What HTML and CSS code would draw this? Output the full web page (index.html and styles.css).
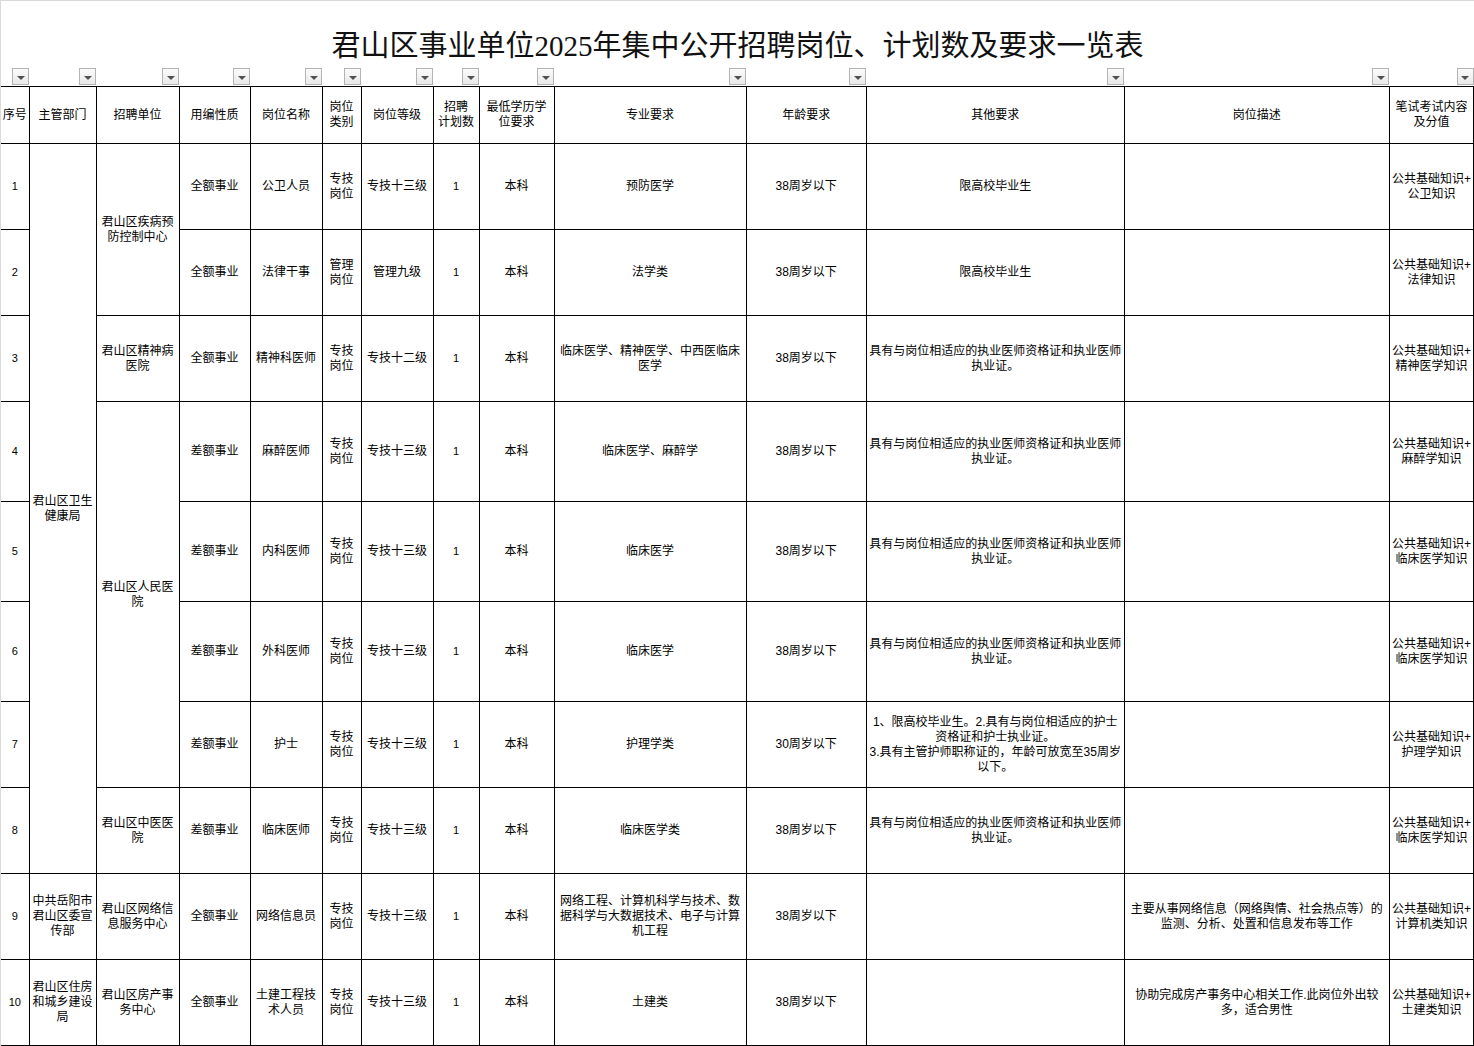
FILE: index.html
```html
<!DOCTYPE html>
<html lang="zh-CN">
<head>
<meta charset="utf-8">
<title>君山区事业单位2025年集中公开招聘岗位、计划数及要求一览表</title>
<link rel="stylesheet" href="styles.css">
</head>
<body>
<div class="sheet">
  <div class="title">君山区事业单位2025年集中公开招聘岗位、计划数及要求一览表</div>
  <table class="grid">
    <colgroup>
      <col class="c1"><col class="c2"><col class="c3"><col class="c4"><col class="c5"><col class="c6"><col class="c7">
      <col class="c8"><col class="c9"><col class="c10"><col class="c11"><col class="c12"><col class="c13"><col class="c14">
    </colgroup>
    <thead>
      <tr class="filters">
        <td><span class="fbtn"></span></td><td><span class="fbtn"></span></td><td><span class="fbtn"></span></td>
        <td><span class="fbtn"></span></td><td><span class="fbtn"></span></td><td><span class="fbtn"></span></td>
        <td><span class="fbtn"></span></td><td><span class="fbtn"></span></td><td><span class="fbtn"></span></td>
        <td><span class="fbtn"></span></td><td><span class="fbtn"></span></td><td><span class="fbtn"></span></td>
        <td><span class="fbtn"></span></td><td><span class="fbtn"></span></td>
      </tr>
      <tr class="head">
        <th class="first">序号</th>
        <th>主管部门</th>
        <th>招聘单位</th>
        <th>用编性质</th>
        <th>岗位名称</th>
        <th>岗位<br>类别</th>
        <th>岗位等级</th>
        <th>招聘<br>计划数</th>
        <th>最低学历学<br>位要求</th>
        <th>专业要求</th>
        <th>年龄要求</th>
        <th>其他要求</th>
        <th>岗位描述</th>
        <th>笔试考试内容<br>及分值</th>
      </tr>
    </thead>
    <tbody>
      <tr class="r86">
        <td class="first num">1</td>
        <td rowspan="8">君山区卫生<br>健康局</td>
        <td rowspan="2">君山区疾病预<br>防控制中心</td>
        <td>全额事业</td>
        <td>公卫人员</td>
        <td>专技<br>岗位</td>
        <td>专技十三级</td>
        <td class="num">1</td>
        <td>本科</td>
        <td>预防医学</td>
        <td>38周岁以下</td>
        <td>限高校毕业生</td>
        <td></td>
        <td>公共基础知识+<br>公卫知识</td>
      </tr>
      <tr class="r86">
        <td class="first num">2</td>
        <td>全额事业</td>
        <td>法律干事</td>
        <td>管理<br>岗位</td>
        <td>管理九级</td>
        <td class="num">1</td>
        <td>本科</td>
        <td>法学类</td>
        <td>38周岁以下</td>
        <td>限高校毕业生</td>
        <td></td>
        <td>公共基础知识+<br>法律知识</td>
      </tr>
      <tr class="r86">
        <td class="first num">3</td>
        <td>君山区精神病<br>医院</td>
        <td>全额事业</td>
        <td>精神科医师</td>
        <td>专技<br>岗位</td>
        <td>专技十二级</td>
        <td class="num">1</td>
        <td>本科</td>
        <td>临床医学、精神医学、中西医临床<br>医学</td>
        <td>38周岁以下</td>
        <td>具有与岗位相适应的执业医师资格证和执业医师<br>执业证。</td>
        <td></td>
        <td>公共基础知识+<br>精神医学知识</td>
      </tr>
      <tr class="r100">
        <td class="first num">4</td>
        <td rowspan="4">君山区人民医<br>院</td>
        <td>差额事业</td>
        <td>麻醉医师</td>
        <td>专技<br>岗位</td>
        <td>专技十三级</td>
        <td class="num">1</td>
        <td>本科</td>
        <td>临床医学、麻醉学</td>
        <td>38周岁以下</td>
        <td>具有与岗位相适应的执业医师资格证和执业医师<br>执业证。</td>
        <td></td>
        <td>公共基础知识+<br>麻醉学知识</td>
      </tr>
      <tr class="r100">
        <td class="first num">5</td>
        <td>差额事业</td>
        <td>内科医师</td>
        <td>专技<br>岗位</td>
        <td>专技十三级</td>
        <td class="num">1</td>
        <td>本科</td>
        <td>临床医学</td>
        <td>38周岁以下</td>
        <td>具有与岗位相适应的执业医师资格证和执业医师<br>执业证。</td>
        <td></td>
        <td>公共基础知识+<br>临床医学知识</td>
      </tr>
      <tr class="r100">
        <td class="first num">6</td>
        <td>差额事业</td>
        <td>外科医师</td>
        <td>专技<br>岗位</td>
        <td>专技十三级</td>
        <td class="num">1</td>
        <td>本科</td>
        <td>临床医学</td>
        <td>38周岁以下</td>
        <td>具有与岗位相适应的执业医师资格证和执业医师<br>执业证。</td>
        <td></td>
        <td>公共基础知识+<br>临床医学知识</td>
      </tr>
      <tr class="r86">
        <td class="first num">7</td>
        <td>差额事业</td>
        <td>护士</td>
        <td>专技<br>岗位</td>
        <td>专技十三级</td>
        <td class="num">1</td>
        <td>本科</td>
        <td>护理学类</td>
        <td>30周岁以下</td>
        <td>1、限高校毕业生。2.具有与岗位相适应的护士<br>资格证和护士执业证。<br>3.具有主管护师职称证的，年龄可放宽至35周岁<br>以下。</td>
        <td></td>
        <td>公共基础知识+<br>护理学知识</td>
      </tr>
      <tr class="r86">
        <td class="first num">8</td>
        <td>君山区中医医<br>院</td>
        <td>差额事业</td>
        <td>临床医师</td>
        <td>专技<br>岗位</td>
        <td>专技十三级</td>
        <td class="num">1</td>
        <td>本科</td>
        <td>临床医学类</td>
        <td>38周岁以下</td>
        <td>具有与岗位相适应的执业医师资格证和执业医师<br>执业证。</td>
        <td></td>
        <td>公共基础知识+<br>临床医学知识</td>
      </tr>
      <tr class="r86">
        <td class="first num">9</td>
        <td>中共岳阳市<br>君山区委宣<br>传部</td>
        <td>君山区网络信<br>息服务中心</td>
        <td>全额事业</td>
        <td>网络信息员</td>
        <td>专技<br>岗位</td>
        <td>专技十三级</td>
        <td class="num">1</td>
        <td>本科</td>
        <td>网络工程、计算机科学与技术、数<br>据科学与大数据技术、电子与计算<br>机工程</td>
        <td>38周岁以下</td>
        <td></td>
        <td>主要从事网络信息（网络舆情、社会热点等）的<br>监测、分析、处置和信息发布等工作</td>
        <td>公共基础知识+<br>计算机类知识</td>
      </tr>
      <tr class="r86">
        <td class="first num">10</td>
        <td>君山区住房<br>和城乡建设<br>局</td>
        <td>君山区房产事<br>务中心</td>
        <td>全额事业</td>
        <td>土建工程技<br>术人员</td>
        <td>专技<br>岗位</td>
        <td>专技十三级</td>
        <td class="num">1</td>
        <td>本科</td>
        <td>土建类</td>
        <td>38周岁以下</td>
        <td></td>
        <td>协助完成房产事务中心相关工作.此岗位外出较<br>多，适合男性</td>
        <td>公共基础知识+<br>土建类知识</td>
      </tr>
    </tbody>
  </table>
</div>
</body>
</html>
```

FILE: styles.css
```css
html, body {
  margin: 0;
  padding: 0;
  background: #ffffff;
}

body {
  font-family: "Liberation Sans", "Noto Sans CJK SC", sans-serif;
  color: #000000;
  font-size: 12px;
  line-height: 15px;
}

.sheet {
  width: 1474px;
  height: 1046px;
  box-sizing: border-box;
  border-top: 1px solid #d9d9d9;
  border-left: 1px solid #d9d9d9;
  overflow: hidden;
}

.title {
  height: 36px;
  padding-top: 31px;
  text-align: center;
  font-family: "Liberation Serif", "Noto Sans CJK SC", serif;
  font-size: 29px;
  line-height: 29px;
  color: #111111;
  white-space: nowrap;
}

.grid {
  width: 1473px;
  table-layout: fixed;
  border-collapse: collapse;
  border-spacing: 0;
}

.c1 { width: 28px; }
.c2 { width: 67px; }
.c3 { width: 83px; }
.c4 { width: 71px; }
.c5 { width: 72px; }
.c6 { width: 39px; }
.c7 { width: 72px; }
.c8 { width: 46px; }
.c9 { width: 75px; }
.c10 { width: 192px; }
.c11 { width: 120px; }
.c12 { width: 258px; }
.c13 { width: 265px; }
.c14 { width: 84px; }

.filters td {
  height: 17px;
  padding: 0 0 1px 0;
  border: none;
  text-align: right;
  vertical-align: bottom;
  line-height: 0;
}

.fbtn {
  display: inline-flex;
  align-items: center;
  justify-content: center;
  width: 15px;
  height: 15px;
  border: 1px solid #b3b3b3;
  background: linear-gradient(#fbfbfb, #e9e9e9);
}

.fbtn::after {
  content: "";
  width: 0;
  height: 0;
  margin-top: 2px;
  border-left: 4px solid transparent;
  border-right: 4px solid transparent;
  border-top: 4px solid #505050;
}

.head th,
tbody td {
  border: 1px solid #000000;
  padding: 0 1px;
  text-align: center;
  vertical-align: middle;
  white-space: nowrap;
  font-weight: normal;
  overflow: visible;
}

.head th.first,
tbody td.first {
  border-left: none;
}

.head th {
  height: 56px;
}

.r86 td { height: 85px; }
.r100 td { height: 99px; }

.num {
  font-family: "Liberation Sans", sans-serif;
  font-size: 11px;
}
```
